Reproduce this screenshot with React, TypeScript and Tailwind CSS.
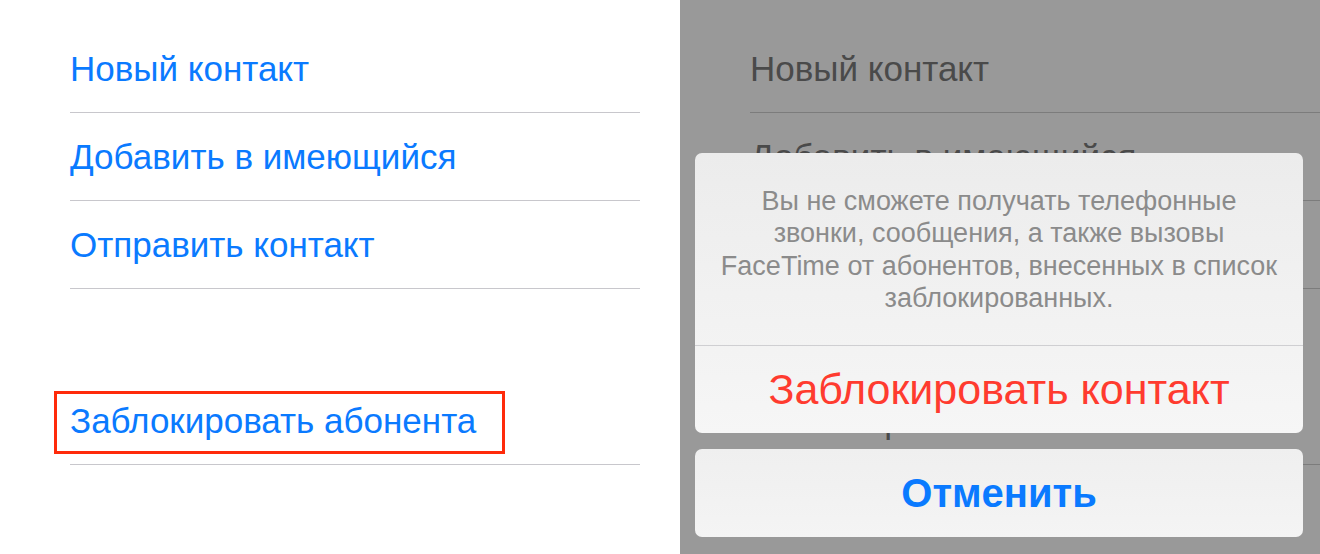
import React from 'react';

const rows = ['Новый контакт', 'Добавить в имеющийся', 'Отправить контакт'];

function ContactList({ dimmed }: { dimmed?: boolean }) {
  const text = dimmed ? 'text-[#4a4a4a]' : 'text-[#0a7aff]';
  const line = dimmed ? 'border-[#7c7c7c]' : 'border-[#c8c7cc]';
  return (
    <div className={`pt-[25px] pl-[70px] ${dimmed ? '' : 'pr-[40px]'}`}>
      {rows.map((r) => (
        <div key={r} className={`h-[88px] flex items-center border-b ${line}`}>
          <span className={`text-[35px] leading-none ${text}`}>{r}</span>
        </div>
      ))}
      <div className="h-[88px]" />
      <div className={`relative h-[88px] flex items-center border-b ${line}`}>
        <span className={`text-[35px] leading-none ${text}`}>Заблокировать абонента</span>
        {!dimmed && (
          <div className="absolute left-[-16px] top-[14px] w-[451px] h-[63px] border-[3px] border-[#ff2a0a]" />
        )}
      </div>
    </div>
  );
}

export default function App() {
  return (
    <div
      className="flex w-[1320px] h-[554px] overflow-hidden"
      style={{ fontFamily: '"Liberation Sans", Arial, sans-serif' }}
    >
      <div className="w-[680px] h-full bg-white">
        <ContactList />
      </div>

      <div className="relative w-[640px] h-full bg-[#999999] overflow-hidden">
        <ContactList dimmed />

        {/* action sheet */}
        <div className="absolute left-[15px] top-[153px] w-[608px] flex flex-col gap-[16px]">
          <div className="rounded-[7px] overflow-hidden bg-gradient-to-b from-[#ececec] to-[#f6f6f6]">
            <div className="h-[193px] flex items-center justify-center px-[10px] border-b border-[#cfcfd2]">
              <p className="text-center text-[27px] leading-[32.5px] text-[#8b8b8b] pt-[1px]">
                Вы не сможете получать телефонные
                <br />
                звонки, сообщения, а также вызовы
                <br />
                FaceTime от абонентов, внесенных в список
                <br />
                заблокированных.
              </p>
            </div>
            <div className="h-[87px] flex items-center justify-center">
              <span className="text-[43px] text-[#ff3b2f] leading-none">Заблокировать контакт</span>
            </div>
          </div>
          <div className="h-[88px] rounded-[7px] bg-gradient-to-b from-[#efefef] to-[#f4f4f4] flex items-center justify-center">
            <span className="text-[40px] font-bold text-[#0a7aff] leading-none">Отменить</span>
          </div>
        </div>
      </div>
    </div>
  );
}
